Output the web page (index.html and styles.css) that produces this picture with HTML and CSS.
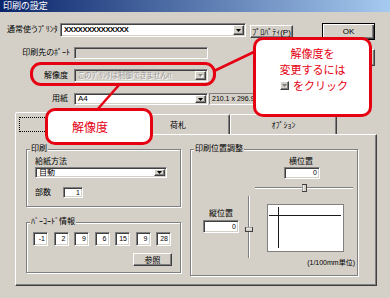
FILE: index.html
```html
<!DOCTYPE html>
<html lang="ja">
<head>
<meta charset="utf-8">
<title>印刷の設定</title>
<link rel="stylesheet" href="styles.css">
</head>
<body>
<div class="titlebar">印刷の設定</div>

<div class="main">
  <div class="form">
    <div class="row r1">
      <span class="lbl l1">通常使うﾌﾟﾘﾝﾀ</span>
      <div class="combo sunken c1">
        <span class="val bold">XXXXXXXXXXXXXX</span>
        <span class="arr raised"><svg width="5" height="3" viewBox="0 0 5 3"><polygon points="0,0 5,0 2.5,3" fill="#000"/></svg></span>
      </div>
      <div class="btn prop">ﾌﾟﾛﾊﾟﾃｨ(P)</div>
    </div>
    <div class="row r2">
      <span class="lbl lr">印刷先のﾎﾟｰﾄ</span>
      <div class="field sunken port"></div>
    </div>
    <div class="row r3">
      <span class="lbl lr">解像度</span>
      <div class="combo sunken dis res">
        <span class="val distext">このﾌﾟﾘﾝﾀは制御できません!!</span>
        <span class="arr raised"><svg width="5" height="4" viewBox="0 0 5 4"><polygon points="1,1 6,1 3.5,4" fill="#fff"/><polygon points="0,0 5,0 2.5,3" fill="#8a8a8a"/></svg></span>
      </div>
    </div>
    <div class="row r4">
      <span class="lbl lr">用紙</span>
      <div class="combo sunken paper">
        <span class="val">A4</span>
        <span class="arr raised"><svg width="5" height="3" viewBox="0 0 5 3"><polygon points="0,0 5,0 2.5,3" fill="#000"/></svg></span>
      </div>
      <div class="size">210.1 x 296.9</div>
    </div>
  </div>
  <div class="side">
    <div class="btn ok">OK</div>
    <div class="btn cancel">ｷｬﾝｾﾙ</div>
  </div>
</div>

<div class="tabs">
  <div class="tab t1"><span class="focus">印刷</span></div>
  <div class="tab t2">荷札</div>
  <div class="tab t3">ｵﾌﾟｼｮﾝ</div>
</div>

<div class="panel">
  <div class="col">
    <div class="group g1">
      <span class="glabel">印刷</span>
      <div class="gl">給紙方法</div>
      <div class="combo sunken feed">
        <span class="val">自動</span>
        <span class="arr raised"><svg width="5" height="3" viewBox="0 0 5 3"><polygon points="0,0 5,0 2.5,3" fill="#000"/></svg></span>
      </div>
      <div class="copies">
        <span class="cl">部数</span>
        <div class="field sunken cp num">1</div>
      </div>
    </div>
    <div class="group g2">
      <span class="glabel">ﾊﾞｰｺｰﾄﾞ情報</span>
      <div class="codes">
        <div class="field sunken code num">-1</div>
        <div class="field sunken code num">2</div>
        <div class="field sunken code num">9</div>
        <div class="field sunken code num">6</div>
        <div class="field sunken code num">15</div>
        <div class="field sunken code num">9</div>
        <div class="field sunken code num">28</div>
      </div>
      <div class="btn ref">参照</div>
    </div>
  </div>
  <div class="group g3">
    <span class="glabel">印刷位置調整</span>
    <div class="hl">横位置</div>
    <div class="field sunken hf num">0</div>
    <div class="hs"><svg width="98" height="8" viewBox="0 0 98 8"><line x1="0" y1="3.5" x2="98" y2="3.5" stroke="#808080"/><line x1="0" y1="4.5" x2="98" y2="4.5" stroke="#fff"/><rect x="47.5" y="0.5" width="4" height="7" fill="#d4d0c8" stroke="#404040"/><line x1="48" y1="1" x2="48" y2="7" stroke="#fff"/></svg></div>
    <div class="va">
      <div class="vl">縦位置</div>
      <div class="field sunken vf num">0</div>
    </div>
    <div class="vs"><svg width="12" height="62" viewBox="0 0 12 62"><line x1="5.5" y1="0" x2="5.5" y2="62" stroke="#808080"/><line x1="6.5" y1="0" x2="6.5" y2="62" stroke="#fff"/><rect x="2.5" y="31.5" width="7" height="4" fill="#d4d0c8" stroke="#404040"/><line x1="3" y1="32" x2="9" y2="32" stroke="#fff"/></svg></div>
    <div class="pv"><svg width="75" height="46" viewBox="0 0 75 46"><line x1="1" y1="10.5" x2="73" y2="10.5" stroke="#1a1a1a"/><line x1="10.5" y1="2" x2="10.5" y2="43" stroke="#1a1a1a"/></svg></div>
    <div class="unit">(1/100mm単位)</div>
  </div>
</div>

<svg class="leaders" width="390" height="298" viewBox="0 0 390 298">
  <line x1="214" y1="71" x2="256" y2="51" stroke="#e50012" stroke-width="2.5"/>
  <line x1="119" y1="85" x2="96" y2="111" stroke="#e50012" stroke-width="2.5"/>
</svg>
<div class="ring"></div>
<div class="callout cr">
  <div>解像度を</div>
  <div>変更するには</div>
  <div class="click"><span class="mini raised"><svg width="5" height="3" viewBox="0 0 5 3"><polygon points="0,0 5,0 2.5,3" fill="#7a7a7a"/></svg></span>をクリック</div>
</div>
<div class="callout cl2">解像度</div>
</body>
</html>
```

FILE: styles.css
```css
* { box-sizing: border-box; }
html, body { margin: 0; padding: 0; }
body {
  width: 390px;
  height: 298px;
  overflow: hidden;
  position: relative;
  background: #d4d0c8;
  font-family: "Liberation Sans", "Noto Sans CJK JP", sans-serif;
  font-size: 8px;
  color: #000;
  font-feature-settings: "palt";
}

.titlebar {
  height: 12px;
  line-height: 12px;
  padding-left: 3px;
  color: #fff;
  font-size: 9px;
  font-family: "Noto Sans CJK JP", sans-serif;
  background: linear-gradient(to right, #0a246a, #a6caf0);
}

.main { display: flex; align-items: flex-start; margin-top: 11px; }
.form { width: 322px; }
.row { display: flex; align-items: flex-start; }
.r2 { margin-top: 9px; }
.r3 { margin-top: 10px; }
.r4 { margin-top: 11px; }

.lbl { white-space: nowrap; }
.l1 { width: 60px; padding-left: 7px; line-height: 14px; }
.lr { width: 74px; padding-right: 6px; text-align: right; }
.r2 .lr { padding-right: 4px; line-height: 12px; }
.r3 .lr { line-height: 13px; }
.r4 .lr { line-height: 12px; }

.sunken {
  border: 1px solid;
  border-color: #808080 #fff #fff #808080;
  box-shadow: inset 1px 1px 0 #404040, inset -1px -1px 0 #d4d0c8;
}
.raised {
  border: 1px solid;
  border-color: #fff #404040 #404040 #fff;
  box-shadow: inset -1px -1px 0 #808080;
  background: #d4d0c8;
}

.combo { display: flex; background: #fff; padding: 1px; }
.combo .val { flex: 1; padding-left: 2px; white-space: nowrap; overflow: hidden; }
.combo .arr {
  width: 11px;
  display: flex;
  align-items: center;
  justify-content: center;
}
.bold { font-weight: bold; font-size: 7.5px; letter-spacing: -0.4px; }

.c1 { width: 186px; height: 14px; }
.c1 .val { line-height: 10px; }
.prop { width: 43px; height: 13px; margin-left: 4px; margin-top: 2px; }

.field { background: #fff; }
.port { width: 134px; height: 12px; background: #d4d0c8; }
.dis { background: #d4d0c8; }
.res { width: 134px; height: 13px; }
.res .val { line-height: 9px; }
.distext { color: #9a9a9a; text-shadow: 1px 1px 0 #fff; font-size: 7.5px; }
.paper { width: 134px; height: 12px; }
.paper .val { line-height: 8px; }
.size {
  margin-left: 1px;
  width: 80px;
  height: 12px;
  padding-left: 2px;
  line-height: 10px;
  font-size: 7px;
  border: 1px solid;
  border-color: #808080 #fff #fff #808080;
  white-space: nowrap;
}

.btn {
  display: flex;
  align-items: center;
  justify-content: center;
  background: #d4d0c8;
  border: 1px solid;
  border-color: #fff #404040 #404040 #fff;
  box-shadow: inset -1px -1px 0 #808080;
  white-space: nowrap;
}
.side { display: flex; flex-direction: column; width: 53px; }
.ok {
  height: 17px;
  border: 1px solid #000;
  box-shadow: inset 1px 1px 0 #fff, inset -1px -1px 0 #404040, inset -2px -2px 0 #808080;
}
.cancel { height: 17px; margin-top: 9px; }

.tabs {
  display: flex;
  align-items: flex-end;
  height: 22px;
  margin-top: 7px;
  padding-left: 15px;
  position: relative;
  z-index: 1;
}
.tab {
  display: flex;
  align-items: center;
  justify-content: center;
  background: #d4d0c8;
  border: 1px solid;
  border-bottom: none;
  border-color: #fff #404040 transparent #fff;
  border-radius: 2px 2px 0 0;
  box-shadow: inset -1px 0 0 #808080;
  font-family: "Noto Sans CJK JP", sans-serif;
}
.t1 { width: 111px; height: 23px; margin-bottom: -1px; }
.t2 { width: 104px; height: 20px; }
.t3 { width: 107px; height: 20px; }
.focus {
  width: 104px;
  height: 15px;
  border: 1px dotted #000;
  display: flex;
  align-items: center;
  justify-content: center;
}

.panel {
  margin-left: 15px;
  width: 362px;
  height: 152px;
  border: 1px solid;
  border-color: #fff #404040 #404040 #fff;
  box-shadow: inset -1px -1px 0 #808080;
  display: flex;
  align-items: flex-start;
  padding: 14px 0 0 10px;
}
.col { width: 155px; display: flex; flex-direction: column; }

.group {
  position: relative;
  border: 1px solid #808080;
  box-shadow: inset 1px 1px 0 #fff, 1px 1px 0 #fff;
}
.glabel {
  position: absolute;
  top: -6px;
  left: 3px;
  padding: 0 1px;
  background: #d4d0c8;
  line-height: 10px;
  white-space: nowrap;
}

.g1 { height: 58px; padding: 7px 0 0 8px; }
.gl { line-height: 9px; }
.feed { width: 132px; height: 11px; margin-top: 1px; }
.feed .val { line-height: 7px; }
.copies { display: flex; margin-top: 9px; }
.cl { width: 28px; line-height: 11px; }
.num { text-align: right; padding-right: 2px; font-size: 7px; }
.cp { width: 20px; height: 11px; line-height: 9px; }

.g2 { height: 51px; margin-top: 15px; padding: 9px 0 0 6px; }
.codes { display: flex; gap: 5.5px; }
.code { width: 15px; height: 14px; line-height: 12px; }
.ref { width: 39px; height: 13px; margin: 7px 0 0 100px; }

.g3 {
  width: 168px;
  height: 127px;
  margin-left: 9px;
  padding: 7px 0 0 8px;
  display: grid;
  grid-template-columns: 44px 12px 100px;
  align-content: start;
}
.hl { grid-column: 3; grid-row: 1; text-align: center; line-height: 9px; padding-right: 8px; }
.hf { grid-column: 3; grid-row: 2; justify-self: center; width: 36px; height: 12px; margin-top: 1px; line-height: 10px; margin-right: 6px; }
.hs { grid-column: 3; grid-row: 3; height: 8px; margin-top: 5px; display: flex; }
.va {
  grid-column: 1;
  grid-row: 4;
  margin-top: 4px;
  padding-top: 13px;
  display: flex;
  flex-direction: column;
  align-items: center;
}
.vl { line-height: 9px; }
.vf { width: 36px; height: 13px; margin-top: 2px; line-height: 11px; }
.vs { grid-column: 2; grid-row: 4; margin-top: 4px; height: 62px; display: flex; }
.pv {
  grid-column: 3;
  grid-row: 4;
  justify-self: center;
  margin-top: 12px;
  width: 77px;
  height: 48px;
  background: #fff;
  border: 1px solid #808080;
  display: flex;
}
.unit { grid-column: 3; grid-row: 5; text-align: right; line-height: 10px; font-size: 7px; white-space: nowrap; }

.leaders { position: absolute; left: 0; top: 0; z-index: 2; }
.ring {
  position: absolute;
  z-index: 2;
  left: 30px;
  top: 62px;
  width: 186px;
  height: 24px;
  border: 3px solid #e50012;
  border-radius: 11px;
}
.callout {
  position: absolute;
  z-index: 3;
  background: #fff;
  border: 3px solid #e50012;
  border-radius: 10px;
  color: #e50012;
  font-family: "Noto Sans CJK JP", sans-serif;
  font-feature-settings: normal;
}
.cr {
  left: 253px;
  top: 37px;
  width: 119px;
  height: 80px;
  padding-top: 5px;
  font-size: 11px;
  line-height: 16px;
  text-align: center;
}
.click { display: flex; align-items: center; justify-content: center; padding-left: 3px; }
.mini {
  width: 9px;
  height: 9px;
  margin-right: 4px;
  display: flex;
  align-items: center;
  justify-content: center;
}
.cl2 {
  left: 45px;
  top: 108px;
  width: 108px;
  height: 37px;
  font-size: 12px;
  display: flex;
  align-items: center;
  padding-left: 24px;
}
```
